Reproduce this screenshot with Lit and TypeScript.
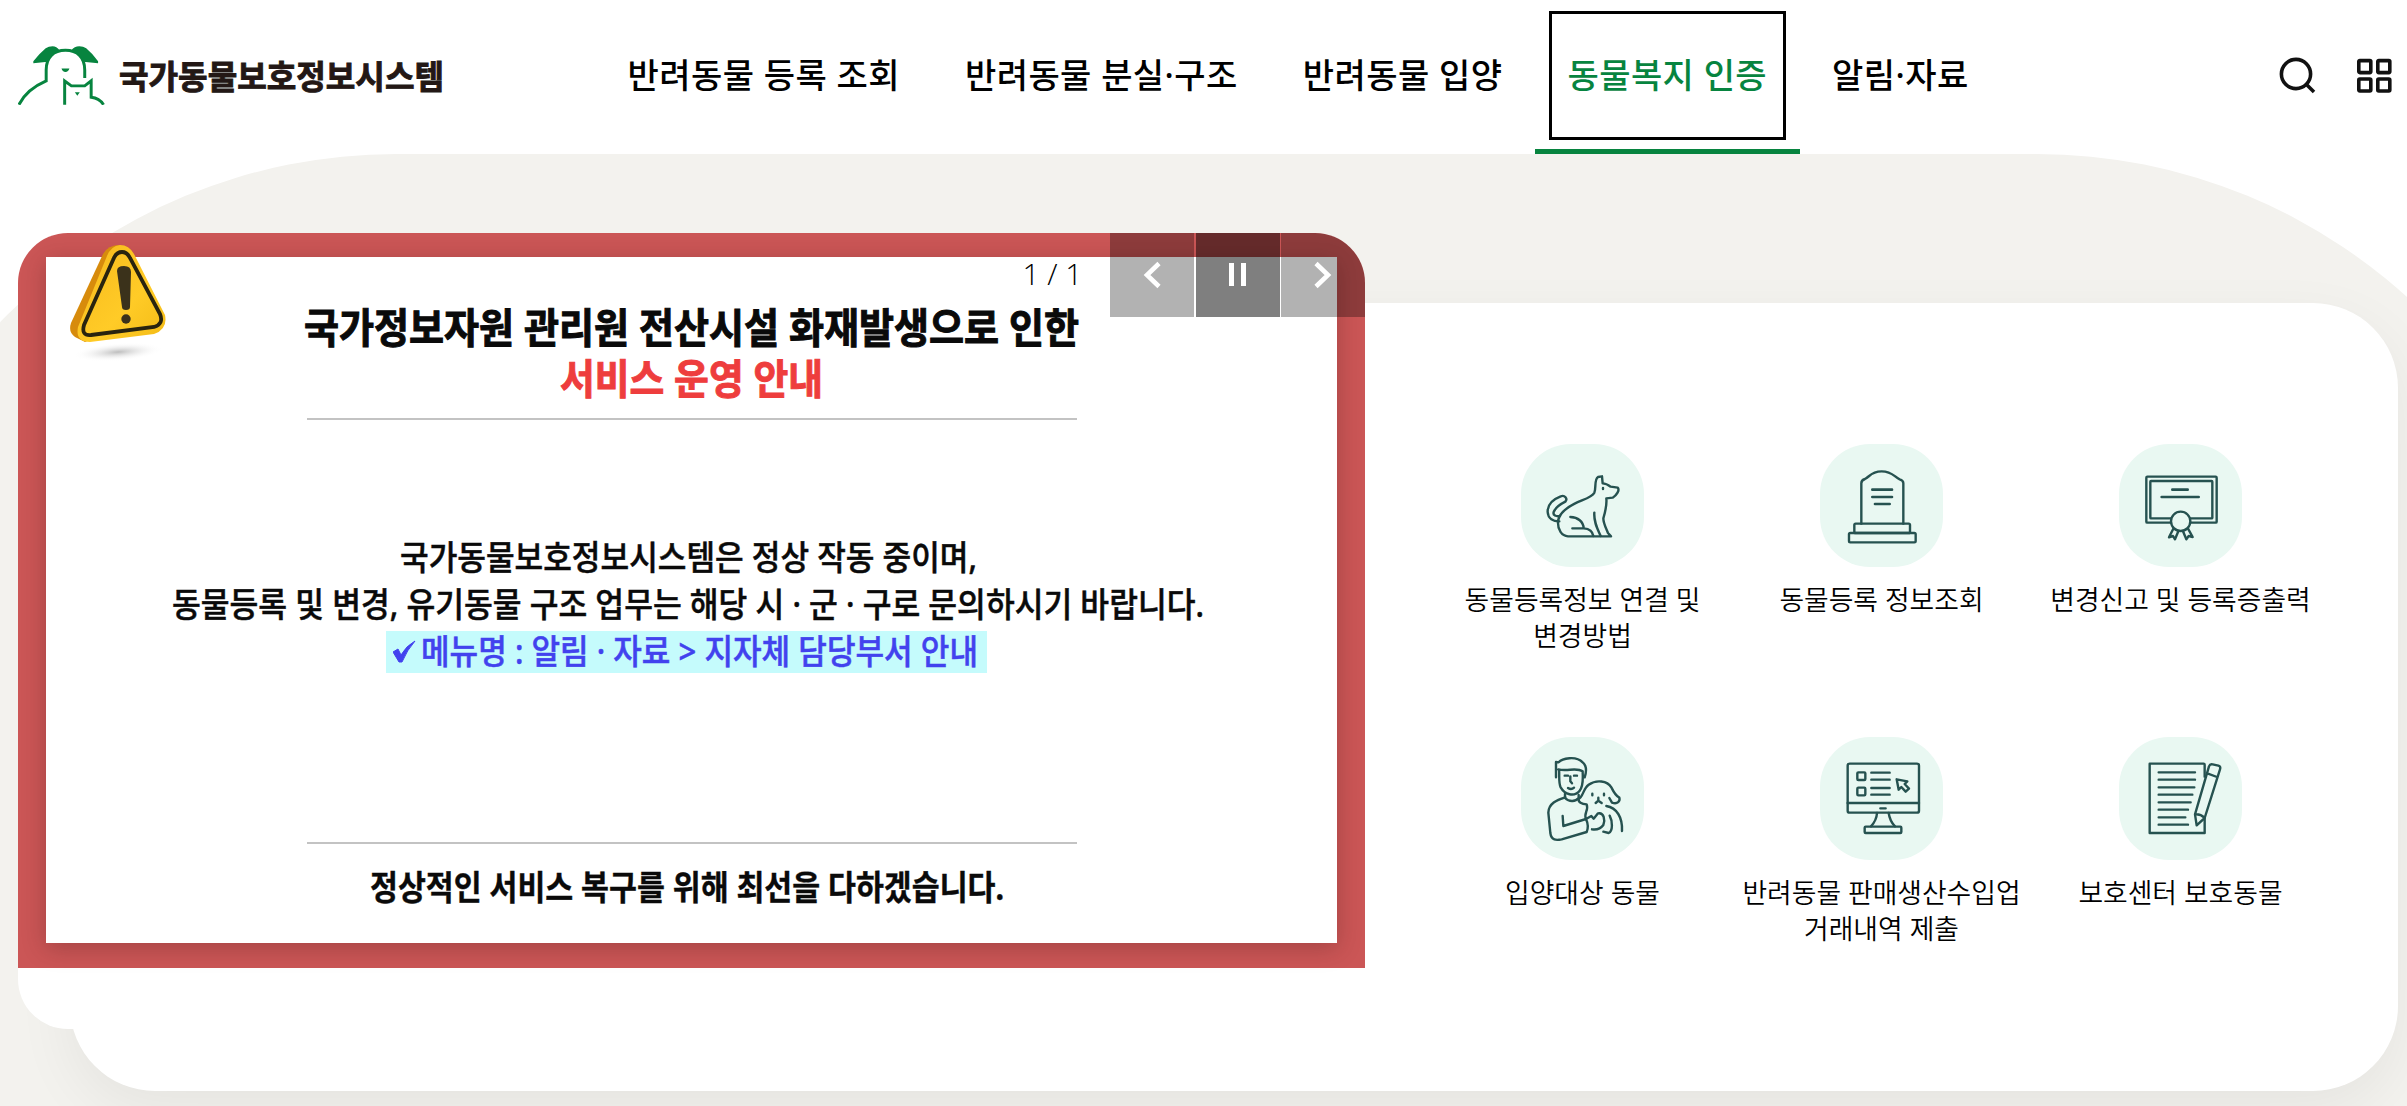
import { LitElement, css, html, svg } from "lit";
import type { SVGTemplateResult } from "lit";
import { customElement, property } from "lit/decorators.js";

interface NavItem {
  label: string;
  active?: boolean;
}

interface QuickItem {
  lines: string[];
  box: string;
  icon: SVGTemplateResult;
}

const NAV: NavItem[] = [
  { label: "반려동물 등록 조회" },
  { label: "반려동물 분실·구조" },
  { label: "반려동물 입양" },
  { label: "동물복지 인증", active: true },
  { label: "알림·자료" },
];

const QUICK: QuickItem[] = [
  {
    lines: ["동물등록정보 연결 및", "변경방법"],
    box: "243 72 369 369",
    icon: svg`
      <path d="M358 304C340 304 324 296 323 276C322 250 344 236 362 229C374 224 384 236 376 245C362 252 346 264 341 276C338 286 348 290 360 288"/>
      <path d="M354 302C358 282 378 264 404 251C428 239 456 232 463 218C469 205 462 178 474 171L486 169L488 190C496 190 504 194 512 200L533 203C540 210 530 226 518 233L499 235C501 255 496 275 490 295C490 312 500 328 504 339L513 349H384C366 348 352 330 354 302Z"/>
      <path d="M463 278C461 306 472 326 482 348M391 291C414 292 430 305 431 325H397M431 325C446 326 458 334 460 348M489 204v3"/>`,
  },
  {
    lines: ["동물등록 정보조회"],
    box: "240 72 369 369",
    icon: svg`
      <path d="M364 311V190Q364 180 375 177C389 171 392 154 425 154S462 171 479 178Q490 181 490 190V311"/>
      <rect x="343" y="311" width="167" height="28" rx="4"/>
      <rect x="327" y="339" width="200" height="28" rx="4"/>
      <path class="bold" d="M397 209H456M397 231H456M405 252H449"/>`,
  },
  {
    lines: ["변경신고 및 등록증출력"],
    box: "236 72 369 369",
    icon: svg`
      <rect x="318" y="170" width="211" height="138" rx="3"/>
      <rect x="330" y="183" width="186" height="112" rx="2"/>
      <path class="bold" d="M396 209H442M364 231H475"/>
      <path d="M399 326L386 352L398 348L404 358L414 334M443 326L457 351L445 348L438 358L428 334"/>
      <circle class="pad" cx="421" cy="304" r="29"/>`,
  },
  {
    lines: ["입양대상 동물"],
    box: "243 81 369 369",
    icon: svg`
      <path d="M348 202V156L356 157C366 145 408 136 428 157C441 168 440 184 434 202M357 178C359 194 355 219 362 232C374 253 402 263 419 242C432 226 428 199 428 184C410 171 382 185 355 178Z"/>
      <path d="M374 197H384M402 197H411M391 199V214L396 220M384 234Q394 241 402 233M375 251V264C388 277 407 275 416 264V255"/>
      <path d="M376 262C350 270 326 280 325 308L331 369C334 392 349 391 365 388L440 366C446 352 443 338 438 327L370 348L368 318"/>
      <path d="M438 327C430 311 447 300 440 283C425 282 414 276 416 267C430 260 429 236 446 224C469 208 502 212 514 232C522 248 526 257 538 263C541 273 533 284 516 278L508 264M499 288C530 293 548 322 546 363M438 327L454 318L461 326L474 310C492 306 496 331 490 345C482 356 468 360 456 358M509 317C518 334 519 363 506 369L490 365"/>
      <path d="M457 251V256M492 251V256M475 263V272L467 279M475 272L485 279"/>`,
  },
  {
    lines: ["반려동물 판매생산수입업", "거래내역 제출"],
    box: "240 81 369 369",
    icon: svg`
      <rect x="323" y="161" width="214" height="147" rx="6"/>
      <path d="M323 279H537M421 295H437M411 309C410 328 403 338 393 349M446 309C449 330 456 340 465 349"/>
      <rect x="374" y="350" width="110" height="19" rx="3"/>
      <rect x="352" y="187" width="24" height="23" rx="3"/>
      <rect x="352" y="233" width="24" height="23" rx="3"/>
      <path d="M394 188H449M394 209H449M394 234H449M394 254H449"/>
      <path d="M470 208L476 239L484 231L497 245L507 236L494 222L502 214Z"/>`,
  },
  {
    lines: ["보호센터 보호동물"],
    box: "236 81 369 369",
    icon: svg`
      <path d="M493 200V164Q493 161 490 161H328V369H493V322"/>
      <path d="M355 187H464M355 209H464M355 232H462M355 254H456M355 277H451M355 299H443M355 322H435M355 344H443"/>
      <path d="M464 313L506 169Q509 161 517 163L534 167Q542 170 539 178L493 324L469 346ZM464 313Q480 311 493 324M501 190L530 201"/>`,
  },
];

/** One line of lettering stretched to an exact width. */
@customElement("fit-text")
export class FitText extends LitElement {
  @property() text = "";
  @property({ type: Number }) width = 100;
  @property({ type: Number }) size = 16;

  static styles = css`
    :host {
      display: block;
      line-height: 0;
    }
    text {
      fill: currentColor;
      stroke: currentColor;
      stroke-width: var(--heavy, 0);
    }
  `;

  render() {
    const h = Math.round(this.size * 1.2);
    return html`
      <svg width=${this.width} height=${h} overflow="visible">
        <text
          x="0"
          y=${Math.round(this.size * 0.95)}
          font-size=${this.size}
          textLength=${this.width}
          lengthAdjust="spacingAndGlyphs"
        >${this.text}</text>
      </svg>
    `;
  }
}

@customElement("site-header")
export class SiteHeader extends LitElement {
  static styles = css`
    :host {
      display: block;
      background: #fff;
    }
    header {
      display: flex;
      height: 154px;
      padding: 0 15px 0 18px;
      box-sizing: border-box;
    }
    .logo {
      display: flex;
      gap: 14px;
      padding-top: 46px;
      width: 426px;
    }
    .name {
      margin-top: 12px;
      color: #231815;
      font-weight: 700;
      --heavy: 0.9px;
    }
    ul {
      display: flex;
      margin: 0 0 0 151px;
      padding: 0;
      list-style: none;
    }
    li {
      display: flex;
      box-sizing: border-box;
      padding: 11px 14px 9px;
      border-bottom: 5px solid transparent;
    }
    li.active {
      border-color: #07843f;
    }
    a {
      display: flex;
      align-items: center;
      box-sizing: border-box;
      padding: 0 15.5px 4px;
      border: 3px solid transparent;
      font-family: "Noto Sans", "Noto Sans CJK KR", sans-serif;
      font-size: 34px;
      font-weight: 500;
      letter-spacing: 0.45px;
      white-space: nowrap;
    }
    .active a {
      border-color: #000;
      color: #07843f;
    }
    .tools {
      display: flex;
      gap: 41px;
      margin-left: auto;
      padding-top: 57px;
    }
  `;

  render() {
    return html`
      <header>
        <div class="logo">
          <svg width="88" height="59" viewBox="0 0 88 59" fill="none" stroke="#07843f" stroke-width="3">
            <path d="M1 59C7 47 17 40 28.5 35V24C28.5 11 36 4 48 4S67.5 11 67.5 24V32" />
            <path d="M47.2 59V35L54 40H67.5L74 34.8V51.5C79 52 84 55 86.5 59" />
            <path d="M35 0Q31 0 28 2Q21 8 15.5 15V17L30 15.5Q34 8 42 4Q39 0 35 0ZM62 0Q66 0 69 2Q76 8 81 15V17L66 15.5Q62 8 54 4Q57 0 62 0Z" fill="#07843f" stroke="none" />
            <path d="M44 22.5H52Q51 26 48 26T44 22.5ZM57.5 46.5H62.5L60 50Z" fill="#07843f" stroke="none" />
          </svg>
          <fit-text class="name" text="국가동물보호정보시스템" width="325" size="33"></fit-text>
        </div>
        <ul>
          ${NAV.map(
            (n) => html`<li class=${n.active ? "active" : ""}><a>${n.label}</a></li>`
          )}
        </ul>
        <div class="tools">
          <svg width="37" height="37" viewBox="0 0 37 37" fill="none" stroke="#111" stroke-width="3.6">
            <circle cx="17" cy="17" r="14.6" />
            <path d="M27.5 27.5L35 35" />
          </svg>
          <svg width="35" height="37" viewBox="0 0 35 37" fill="none" stroke="#111" stroke-width="3.6">
            <rect x="1.8" y="3.6" width="12" height="12" rx="1" />
            <rect x="20.8" y="3.6" width="12" height="12" rx="1" />
            <rect x="1.8" y="22" width="12" height="12" rx="1" />
            <rect x="20.8" y="22" width="12" height="12" rx="1" />
          </svg>
        </div>
      </header>
    `;
  }
}

@customElement("notice-slider")
export class NoticeSlider extends LitElement {
  static styles = css`
    :host {
      display: block;
      position: relative;
      overflow: hidden;
      border-radius: 50px;
      background: #fff;
    }
    .slide {
      height: 735px;
      box-sizing: border-box;
      padding: 24px 28px 25px;
      background: #cb5656;
    }
    .panel {
      display: flex;
      flex-direction: column;
      align-items: center;
      height: 686px;
      box-sizing: border-box;
      padding-top: 47px;
      background: #fff;
      box-shadow: 0 5px 22px rgba(60, 20, 20, 0.28);
      color: #0a0a0a;
      font-family: "Noto Sans", "Noto Sans CJK KR", sans-serif;
    }
    .title {
      display: flex;
      flex-direction: column;
      align-items: center;
      gap: 2px;
      font-weight: 700;
      --heavy: 1px;
    }
    .red {
      color: #ee3d3d;
    }
    hr {
      width: 770px;
      height: 2px;
      margin: 14px 0 0;
      border: 0;
      background: #c3c3c3;
    }
    .body {
      display: flex;
      flex-direction: column;
      align-items: center;
      gap: 6px;
      margin: 118px 7px 155px 0;
      font-weight: 500;
      --heavy: 0.5px;
    }
    .mark {
      display: flex;
      align-items: center;
      gap: 5px;
      width: 601px;
      height: 42px;
      box-sizing: border-box;
      padding-left: 7px;
      margin: -1px 4px 0 0;
      background: #c5fbfc;
      color: #4242ee;
    }
    .last {
      margin: 24px 9px 0 0;
      font-weight: 700;
      --heavy: 0.4px;
    }
    .warning {
      position: absolute;
      left: 50px;
      top: 10px;
    }
    .control {
      position: absolute;
      top: 0;
      right: 0;
      display: flex;
      gap: 1.5px;
      height: 84px;
    }
    .count {
      margin-right: 26px;
      padding-top: 23px;
      font-family: "Open Sans", "Noto Sans", sans-serif;
      font-size: 30px;
      font-weight: 300;
      line-height: 36px;
      color: #000;
    }
    button {
      display: grid;
      place-items: center;
      width: 84px;
      padding: 0;
      border: 0;
      background: rgba(0, 0, 0, 0.3);
    }
    button.pause {
      background: rgba(0, 0, 0, 0.5);
    }
  `;

  private arrow(d: string) {
    return html`<button>
      <svg width="84" height="84" fill="none" stroke="#fff" stroke-width="4.6"><path d=${d} /></svg>
    </button>`;
  }

  render() {
    return html`
      <div class="slide">
        <div class="panel">
          <div class="title">
            <fit-text text="국가정보자원 관리원 전산시설 화재발생으로 인한" width="775" size="41"></fit-text>
            <fit-text class="red" text="서비스 운영 안내" width="263" size="41"></fit-text>
          </div>
          <hr />
          <div class="body">
            <fit-text text="국가동물보호정보시스템은 정상 작동 중이며," width="577" size="34"></fit-text>
            <fit-text text="동물등록 및 변경, 유기동물 구조 업무는 해당 시 · 군 · 구로 문의하시기 바랍니다." width="1032" size="34"></fit-text>
            <div class="mark">
              <svg width="23" height="24" viewBox="0 0 23 24">
                <path d="M0 12L5 9L8 15Q13 6 22 1Q14 10 9 22H6Z" fill="currentColor" stroke="currentColor" />
              </svg>
              <fit-text text="메뉴명 : 알림 · 자료 > 지자체 담당부서 안내" width="557" size="34"></fit-text>
            </div>
          </div>
          <hr />
          <fit-text class="last" text="정상적인 서비스 복구를 위해 최선을 다하겠습니다." width="634" size="34"></fit-text>
        </div>
      </div>
      <svg class="warning" width="102" height="120" viewBox="-2 -2 102 120">
        <defs>
          <linearGradient id="face" x1="0" y1="0" x2="1" y2="1">
            <stop offset="0" stop-color="#f6b91c" />
            <stop offset="0.6" stop-color="#ffcb27" />
            <stop offset="1" stop-color="#f3bb16" />
          </linearGradient>
          <radialGradient id="ground">
            <stop offset="0" stop-color="#bdbdbd" />
            <stop offset="1" stop-color="#fff" stop-opacity="0" />
          </radialGradient>
        </defs>
        <ellipse cx="48" cy="107" rx="45" ry="9" fill="url(#ground)" transform="rotate(-4 48 107)" />
        <path d="M50 0Q38 0 33 9L1 78Q-2 87 5 92L15 97L80 70Z" fill="#d78b0c" />
        <path d="M50 0Q41 1 37 11L8 82Q5 97 20 97L84 89Q98 84 95 70L64 9Q59 0 50 0Z" fill="url(#face)" />
        <path d="M52 7Q46 7 43 15L14 80Q11 91 21 90L84 82Q94 79 90 69L60 13Q57 7 52 7Z" fill="none" stroke="#29240f" stroke-width="3.8" />
        <path d="M47 26Q47 21 54 21T61 27L60 62Q60 65 56 65T52 62Z" fill="#3b321b" />
        <circle cx="56" cy="74" r="4.7" fill="#3b321b" />
      </svg>
      <div class="control">
        <span class="count">1 / 1</span>
        ${this.arrow("M49 30.5L37 42L49 53.5")}
        <button class="pause">
          <svg width="84" height="84" fill="#fff">
            <rect x="33" y="30" width="5" height="23" />
            <rect x="45" y="30" width="5" height="23" />
          </svg>
        </button>
        ${this.arrow("M35 30.5L47 42L35 53.5")}
      </div>
    `;
  }
}

@customElement("quick-menu")
export class QuickMenu extends LitElement {
  static styles = css`
    :host {
      display: grid;
      grid-template-columns: repeat(3, 299px);
      grid-auto-rows: 293px;
    }
    .item {
      display: flex;
      flex-direction: column;
      align-items: center;
      gap: 15px;
      white-space: nowrap;
      text-align: center;
      font-family: "Noto Sans", "Noto Sans CJK KR", sans-serif;
      font-size: 26.8px;
      font-weight: 350;
      line-height: 36px;
      color: #000;
    }
    .item svg {
      width: 123px;
      height: 123px;
      border-radius: 50px;
      background: #e9f8f2;
      fill: none;
      stroke: #265250;
      stroke-width: 7.2;
      stroke-linecap: round;
      stroke-linejoin: round;
    }
    .bold {
      stroke-width: 8;
    }
    .item .pad {
      fill: #e9f8f2;
    }
  `;

  render() {
    return html`${QUICK.map(
      (q) => html`<div class="item">
        <svg viewBox=${q.box}>${q.icon}</svg>
        <div>${q.lines.map((l) => html`<div>${l}</div>`)}</div>
      </div>`
    )}`;
  }
}

@customElement("app-root")
export class AppRoot extends LitElement {
  static styles = css`
    :host {
      display: block;
      height: 1106px;
      overflow: hidden;
      background: #fff;
      font-family: "Noto Sans CJK KR", sans-serif;
      color: #000;
    }
    .hero {
      width: 2741px;
      height: 1500px;
      margin-left: -154px;
      box-sizing: border-box;
      padding: 79px 0 0 172px;
      border-radius: 550px 550px 0 0;
      background: #f3f2ee;
    }
    .stage {
      display: grid;
      grid-template: 70px 726px 62px / 1347px 1033px;
    }
    .card {
      grid-area: 2 / 1 / 4 / 3;
      margin-left: 52px;
      border-radius: 85px;
      background: #fff;
      box-shadow: 0 20px 60px rgba(0, 0, 0, 0.06);
    }
    notice-slider {
      grid-area: 1 / 1 / 3 / 2;
    }
    quick-menu {
      grid-area: 2 / 2 / 4 / 3;
      padding: 141px 0 0 68px;
    }
  `;

  render() {
    return html`
      <site-header></site-header>
      <main class="hero">
        <div class="stage">
          <div class="card"></div>
          <notice-slider></notice-slider>
          <quick-menu></quick-menu>
        </div>
      </main>
    `;
  }
}

declare global {
  interface HTMLElementTagNameMap {
    "app-root": AppRoot;
    "site-header": SiteHeader;
    "notice-slider": NoticeSlider;
    "quick-menu": QuickMenu;
    "fit-text": FitText;
  }
}
